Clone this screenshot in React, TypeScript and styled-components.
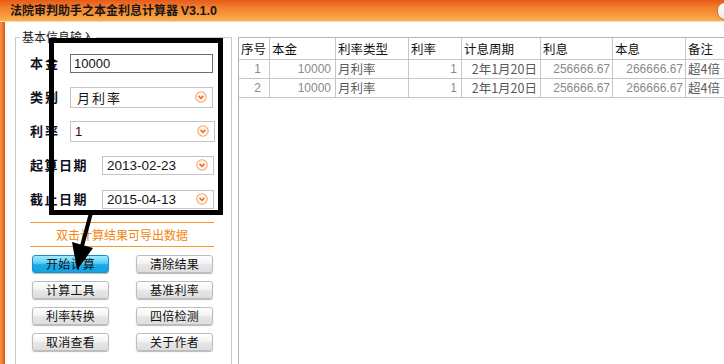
import React from "react";
import styled, { createGlobalStyle, css } from "styled-components";

const GlobalStyle = createGlobalStyle`
    html, body { margin: 0; padding: 0; background: #fff; }
    body { font-family: "Noto Sans CJK SC", "Liberation Sans", sans-serif; }
`;

const cjk = `"Noto Sans CJK SC", sans-serif`;

const Window = styled.div`
    position: relative;
    width: 724px;
    height: 364px;
    overflow: hidden;
    background: #fff;
    display: flex;
    flex-direction: column;
`;

const TitleBar = styled.div`
    flex: none;
    height: 22px;
    box-sizing: border-box;
    display: flex;
    align-items: center;
    justify-content: space-between;
    padding-left: 10px;
    background: linear-gradient(#e75a1b 0%, #f3802a 35%, #f89a3e 75%, #fab058 100%);
    border-bottom: 1px solid #fcd5a8;
`;

const Title = styled.h1`
    margin: 0;
    font: bold 12px/22px ${cjk};
    color: #161616;
    white-space: nowrap;
`;

const Version = styled.span`
    font-family: "Liberation Sans", sans-serif;
    font-weight: bold;
    font-size: 12.5px;
`;

const CloseCap = styled.div`
    width: 20px;
    height: 16px;
    margin-right: -15px;
    border-radius: 8px;
    background: linear-gradient(#ffffff, #ececec);
    border: 1px solid #d8722e;
`;

const Body = styled.div`
    flex: 1;
    display: flex;
    align-items: flex-start;
    min-height: 0;
`;

const Edge = styled.div`
    flex: none;
    align-self: stretch;
    width: 5px;
    background: linear-gradient(to right, #f59748, #ea7428 60%, #c9561a);
`;

const InputGroup = styled.fieldset`
    flex: none;
    box-sizing: border-box;
    width: 217px;
    height: 350px;
    margin: 8px 0 0 10px;
    padding: 0;
    border: 1px solid #c9c9c9;
    min-width: 0;
`;

const Legend = styled.legend`
    margin-left: 4px;
    padding: 0 2px;
    font: 12px/14px ${cjk};
    color: #1e1e1e;
`;

const GroupInner = styled.div`
    padding: 9px 16px 0 14px;
`;

const Form = styled.div`
    display: flex;
    flex-direction: column;
    gap: 14px;
`;

const FormRow = styled.div`
    display: flex;
    align-items: center;
    height: 20px;
`;

const Label = styled.span<{ $wide?: boolean }>`
    flex: none;
    width: ${p => (p.$wide ? 72 : 40)}px;
    font: bold 13px/20px ${cjk};
    letter-spacing: ${p => (p.$wide ? 1.5 : 2)}px;
    color: #10101c;
`;

const TextField = styled.input`
    box-sizing: border-box;
    width: 143px;
    height: 19px;
    margin: 0;
    padding: 0 0 0 3px;
    border: 1px solid #6e6e6e;
    font: 13px "Liberation Sans", sans-serif;
    color: #111;
    outline: none;
`;

const SelectBox = styled.div<{ $width: number; $height?: number }>`
    box-sizing: border-box;
    display: flex;
    align-items: center;
    justify-content: space-between;
    width: ${p => p.$width}px;
    height: ${p => p.$height ?? 21}px;
    padding: 0 5px 0 4px;
    border: 1px solid #c4c4c4;
    background: #fff;
`;

const SelectText = styled.span<{ $kind: "cjk" | "num" | "date" }>`
    color: #151515;
    ${p =>
        p.$kind === "cjk"
            ? css`font: 13px ${cjk}; letter-spacing: 2px; padding-left: 2px;`
            : p.$kind === "num"
            ? css`font: 13px "Liberation Sans", sans-serif; color: #3a0a0a;`
            : css`font: 13.5px "Liberation Sans", sans-serif;`}
`;

const Hint = styled.div`
    width: 184px;
    height: 25px;
    box-sizing: border-box;
    margin-top: 13px;
    border-top: 1px solid #f49a2e;
    border-bottom: 1px solid #f49a2e;
    font: 12px/23px ${cjk};
    color: #f3860f;
    text-align: center;
`;

const ButtonGrid = styled.div`
    display: grid;
    grid-template-columns: 77px 77px;
    column-gap: 27px;
    row-gap: 8px;
    margin: 8px 0 0 2px;
`;

const Button = styled.button<{ $primary?: boolean }>`
    height: 18px;
    padding: 0;
    border-radius: 3px;
    font: 12px/16px ${cjk};
    letter-spacing: 0.3px;
    color: #111;
    cursor: pointer;
    border: 1px solid ${p => (p.$primary ? "#1b8fcc" : "#bdbdbd")};
    background: ${p =>
        p.$primary
            ? "linear-gradient(#a4ebff, #58cdf6 45%, #1aa9e8 55%, #16a2e2)"
            : "linear-gradient(#ffffff, #f4f4f4 45%, #e6e6e6 55%, #dedede)"};
    box-shadow: 0 1px 1px rgba(0, 0, 0, 0.28);
`;

const TablePanel = styled.div`
    flex: 1;
    align-self: stretch;
    margin: 15px 0 0 6px;
    border-top: 1px solid #b4b4b4;
    border-left: 1px solid #b4b4b4;
    overflow: hidden;
`;

const Grid = styled.table`
    border-collapse: separate;
    border-spacing: 0;
    table-layout: fixed;
    width: 507px;
`;

const Th = styled.th`
    padding: 0 0 0 2px;
    border-right: 1px solid #c6c6c6;
    border-bottom: 1px solid #c6c6c6;
    font: 12.5px/21px ${cjk};
    font-weight: normal;
    color: #111;
    text-align: left;
    white-space: nowrap;
    overflow: hidden;
`;

const Td = styled.td<{ $align?: "left" | "right"; $pr?: number; $num?: boolean }>`
    padding: 0 ${p => p.$pr ?? 3}px 0 2px;
    border-right: 1px solid #c6c6c6;
    border-bottom: 1px solid #c6c6c6;
    text-align: ${p => p.$align ?? "right"};
    white-space: nowrap;
    overflow: hidden;
    font: ${p => (p.$num ? `12px/18px "Liberation Sans", sans-serif` : `12.5px/18px ${cjk}`)};
    color: ${p => (p.$num ? "#8a8a8a" : "#5a5a5a")};
`;

const Annotation = styled.svg`
    position: absolute;
    left: 0;
    top: 0;
    pointer-events: none;
`;

const DropIcon = () => (
    <svg width="12" height="12" viewBox="0 0 12 12">
        <circle cx="6" cy="6" r="5.2" fill="#fff6ef" stroke="#f5a46e" strokeWidth="1.1" />
        <polyline points="3.6,4.9 6,7.3 8.4,4.9" fill="none" stroke="#ef7126" strokeWidth="1.7" />
    </svg>
);

const columns = [31, 66, 73, 53, 79, 72, 73, 60];
const headers = ["序号", "本金", "利率类型", "利率", "计息周期", "利息", "本息", "备注"];

const rows = [
    { no: 1, principal: "10000", type: "月利率", rate: "1", period: "2年1月20日", interest: "256666.67", total: "266666.67", note: "超4倍" },
    { no: 2, principal: "10000", type: "月利率", rate: "1", period: "2年1月20日", interest: "256666.67", total: "266666.67", note: "超4倍" },
];

const buttons = ["开始计算", "清除结果", "计算工具", "基准利率", "利率转换", "四倍检测", "取消查看", "关于作者"];

export default function App() {
    return (
        <>
            <GlobalStyle />
            <Window>
                <TitleBar>
                    <Title>法院审判助手之本金利息计算器 <Version>V3.1.0</Version></Title>
                    <CloseCap />
                </TitleBar>
                <Body>
                    <Edge />
                    <InputGroup>
                        <Legend>基本信息输入</Legend>
                        <GroupInner>
                            <Form>
                                <FormRow>
                                    <Label>本金</Label>
                                    <TextField value="10000" readOnly />
                                </FormRow>
                                <FormRow>
                                    <Label>类别</Label>
                                    <SelectBox $width={143}>
                                        <SelectText $kind="cjk">月利率</SelectText>
                                        <DropIcon />
                                    </SelectBox>
                                </FormRow>
                                <FormRow>
                                    <Label>利率</Label>
                                    <SelectBox $width={145}>
                                        <SelectText $kind="num">1</SelectText>
                                        <DropIcon />
                                    </SelectBox>
                                </FormRow>
                                <FormRow>
                                    <Label $wide>起算日期</Label>
                                    <SelectBox $width={112} $height={19}>
                                        <SelectText $kind="date">2013-02-23</SelectText>
                                        <DropIcon />
                                    </SelectBox>
                                </FormRow>
                                <FormRow>
                                    <Label $wide>截止日期</Label>
                                    <SelectBox $width={112} $height={19}>
                                        <SelectText $kind="date">2015-04-13</SelectText>
                                        <DropIcon />
                                    </SelectBox>
                                </FormRow>
                            </Form>
                            <Hint>双击计算结果可导出数据</Hint>
                            <ButtonGrid>
                                {buttons.map((b, i) => (
                                    <Button key={b} type="button" $primary={i === 0}>{b}</Button>
                                ))}
                            </ButtonGrid>
                        </GroupInner>
                    </InputGroup>
                    <TablePanel>
                        <Grid>
                            <colgroup>
                                {columns.map((w, i) => <col key={i} style={{ width: w }} />)}
                            </colgroup>
                            <thead>
                                <tr>{headers.map(h => <Th key={h}>{h}</Th>)}</tr>
                            </thead>
                            <tbody>
                                {rows.map(r => (
                                    <tr key={r.no}>
                                        <Td $num $pr={8}>{r.no}</Td>
                                        <Td $num $pr={4}>{r.principal}</Td>
                                        <Td $align="left">{r.type}</Td>
                                        <Td $num $pr={4}>{r.rate}</Td>
                                        <Td $pr={3}>{r.period}</Td>
                                        <Td $num $pr={2}>{r.interest}</Td>
                                        <Td $num $pr={2}>{r.total}</Td>
                                        <Td $align="left">{r.note}</Td>
                                    </tr>
                                ))}
                            </tbody>
                        </Grid>
                    </TablePanel>
                </Body>
                <Annotation width="724" height="364" viewBox="0 0 724 364">
                    <rect x="51.5" y="40.5" width="169" height="172" fill="none" stroke="#000" strokeWidth="5" />
                    <line x1="91" y1="213" x2="82" y2="246" stroke="#000" strokeWidth="4" />
                    <polygon points="72,242 93,248 77,270" fill="#000" />
                </Annotation>
            </Window>
        </>
    );
}
